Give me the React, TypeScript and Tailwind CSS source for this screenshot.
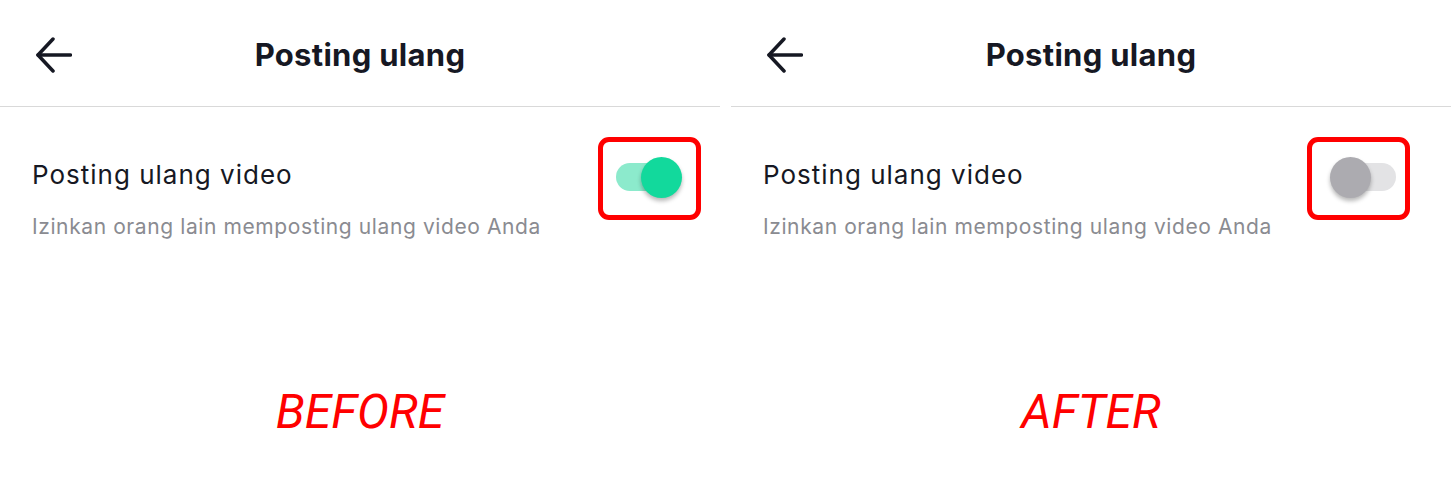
import React from "react";

function BackArrow() {
  return (
    <svg width="36" height="36" viewBox="0 0 36 36" fill="none" stroke="#161823" strokeWidth="3.5" strokeLinecap="round" strokeLinejoin="round">
      <path d="M34.5 18H2" />
      <path d="M17 2L2 18L17 34" />
    </svg>
  );
}

function Toggle({ on }: { on: boolean }) {
  return (
    <div className={on ? "relative w-[50px] h-[28px] rounded-full bg-[#8ceacc]" : "relative w-[50px] h-[28px] rounded-full bg-[#e3e3e5]"}>
      <div
        className={
          on
            ? "absolute top-[-6px] left-[25px] w-[41px] h-[41px] rounded-full bg-[#12d99c] shadow-[0_3px_4px_rgba(0,0,0,0.28)]"
            : "absolute top-[-6px] left-[-16px] w-[41px] h-[41px] rounded-full bg-[#acabb0] shadow-[0_3px_4px_rgba(0,0,0,0.28)]"
        }
      />
    </div>
  );
}

function Panel({ on, label }: { on: boolean; label: string }) {
  return (
    <div className="w-[720px] h-[496px] flex flex-col bg-white">
      <div className="h-[107px] border-b border-[#d9d9d9] flex items-center px-[36px] pt-[3px]">
        <BackArrow />
        <div className="flex-1 text-center text-[31px] font-bold text-[#161823] tracking-[0.3px] leading-none">
          Posting ulang
        </div>
        <div className="w-[36px]" />
      </div>
      <div className={on ? "flex justify-between pl-[32px] pr-[19px]" : "flex justify-between pl-[32px] pr-[41px]"}>
        <div className="pt-[51px]">
          <div className="text-[26px] text-[#161823] leading-[34px] tracking-[1px]">Posting ulang video</div>
          <div className="mt-[21px] text-[21px] text-[#8a8b91] leading-[28px] tracking-[0.6px]">Izinkan orang lain memposting ulang video Anda</div>
        </div>
        <div className="mt-[30px] w-[103px] h-[83px] border-[5px] border-[#ff0000] rounded-[11px] shrink-0">
          <div className={on ? "pt-[21px] pl-[13px]" : "pt-[21px] pl-[34px]"}>
            <Toggle on={on} />
          </div>
        </div>
      </div>
      <div className="mt-[147px] text-center text-[48px] italic text-[#ff0000] leading-none" style={{ fontFamily: "Roboto, sans-serif" }}>
        {label}
      </div>
    </div>
  );
}

export default function App() {
  return (
    <div className="w-[1451px] h-[496px] bg-white flex overflow-hidden" style={{ fontFamily: "Inter, 'Noto Sans', sans-serif" }}>
      <Panel on={true} label="BEFORE" />
      <div className="w-[11px] shrink-0" />
      <Panel on={false} label="AFTER" />
    </div>
  );
}
